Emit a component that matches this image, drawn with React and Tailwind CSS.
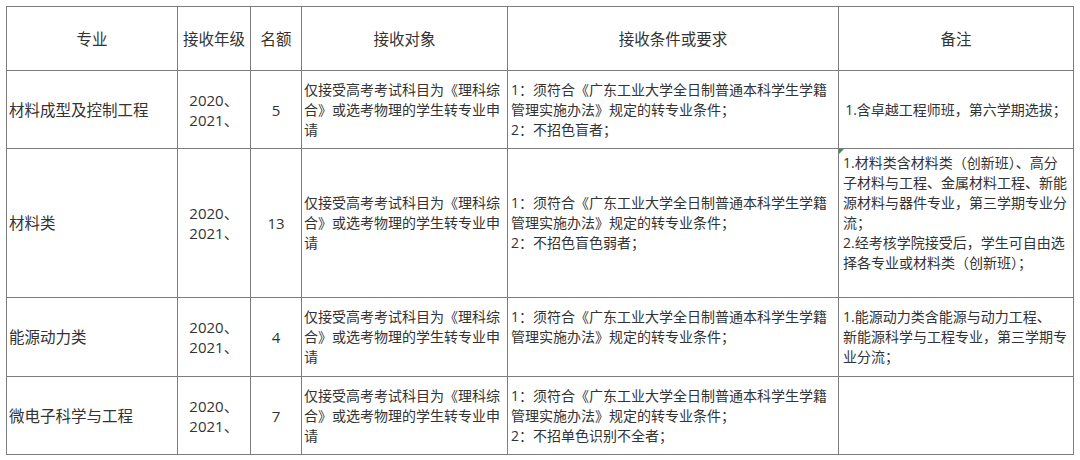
const cond3 = [
  "1：须符合《广东工业大学全日制普通本科学生学籍",
  "管理实施办法》规定的转专业条件；",
];

const target = ["仅接受高考考试科目为《理科综", "合》或选考物理的学生转专业申", "请"];

const rows = [
  {
    h: "h-[78px]",
    major: "材料成型及控制工程",
    quota: "5",
    cond: [...cond3, "2：不招色盲者；"],
    note: ["1.含卓越工程师班，第六学期选拔；"],
    noteCenter: true,
  },
  {
    h: "h-[149px]",
    major: "材料类",
    quota: "13",
    cond: [...cond3, "2：不招色盲色弱者；"],
    note: [
      "1.材料类含材料类（创新班）、高分",
      "子材料与工程、金属材料工程、新能",
      "源材料与器件专业，第三学期专业分",
      "流；",
      "2.经考核学院接受后，学生可自由选",
      "择各专业或材料类（创新班）；",
    ],
    noteTop: true,
    flag: true,
  },
  {
    h: "h-[79px]",
    major: "能源动力类",
    quota: "4",
    cond: [...cond3, "\u00a0"],
    note: ["1.能源动力类含能源与动力工程、", "新能源科学与工程专业，第三学期专", "业分流；"],
  },
  {
    h: "h-[78px]",
    major: "微电子科学与工程",
    quota: "7",
    cond: [...cond3, "2：不招单色识别不全者；"],
    note: [],
  },
];

function Lines({ lines }) {
  return lines.map((l, i) => (
    <div key={i} className="whitespace-nowrap">
      {l}
    </div>
  ));
}

const cell = "border border-[#7d7d7d] align-middle";

export default function App() {
  return (
    <div
      className="h-[460px] w-[1080px] overflow-hidden bg-white pl-[6px] pt-[6px] text-[#333333]"
      style={{ fontFamily: '"Open Sans", "Noto Sans CJK SC", sans-serif' }}
    >
      <table className="w-[1067px] table-fixed border-collapse text-[14px] leading-[20px]">
        <colgroup>
          <col className="w-[171px]" />
          <col className="w-[73px]" />
          <col className="w-[51px]" />
          <col className="w-[206px]" />
          <col className="w-[331px]" />
          <col className="w-[235px]" />
        </colgroup>
        <thead>
          <tr className="h-[64px] text-center text-[15.5px]">
            <th className={`${cell} font-normal`}>专业</th>
            <th className={`${cell} font-normal`}>接收年级</th>
            <th className={`${cell} font-normal`}>名额</th>
            <th className={`${cell} font-normal`}>接收对象</th>
            <th className={`${cell} font-normal`}>接收条件或要求</th>
            <th className={`${cell} font-normal`}>备注</th>
          </tr>
        </thead>
        <tbody>
          {rows.map((r) => (
            <tr key={r.major} className={r.h}>
              <td className={`${cell} pl-[2px] text-[15.5px]`}>{r.major}</td>
              <td className={`${cell} text-center text-[15px]`}>
                <div>2020、</div>
                <div>2021、</div>
              </td>
              <td className={`${cell} text-center text-[15px]`}>{r.quota}</td>
              <td className={`${cell} pl-[2px]`}>
                <Lines lines={target} />
              </td>
              <td className={`${cell} pl-[3px]`}>
                <Lines lines={r.cond} />
              </td>
              <td
                className={`${cell} relative ${r.noteCenter ? "text-center" : "pl-[4px]"} ${
                  r.noteTop ? "align-top pt-[4px]" : ""
                }`}
              >
                {r.flag && (
                  <span className="absolute left-0 top-0 h-0 w-0 border-l-[5px] border-t-[5px] border-l-transparent border-t-[#2e9e3e] -scale-x-100" />
                )}
                <Lines lines={r.note} />
              </td>
            </tr>
          ))}
        </tbody>
      </table>
    </div>
  );
}
